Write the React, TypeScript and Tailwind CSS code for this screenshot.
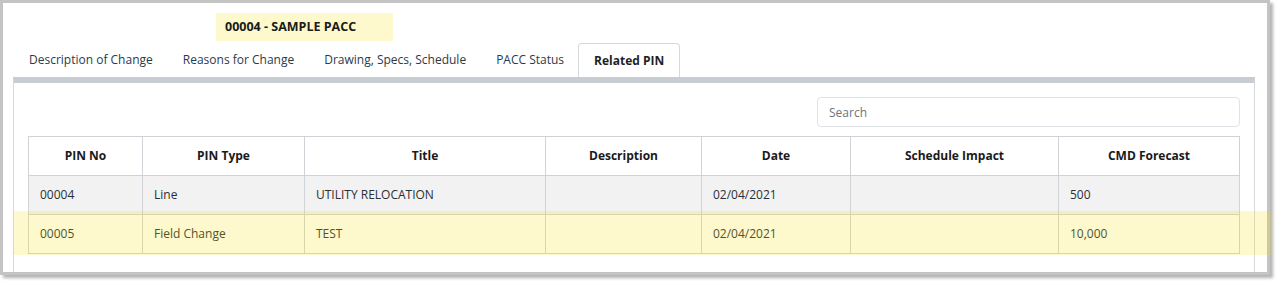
import React from 'react';

interface PinRow {
  pinNo: string;
  pinType: string;
  title: string;
  description: string;
  date: string;
  scheduleImpact: string;
  cmdForecast: string;
}

const tabs = ['Description of Change', 'Reasons for Change', 'Drawing, Specs, Schedule', 'PACC Status', 'Related PIN'];

const columns = [
  { label: 'PIN No', width: 'w-[114px]' },
  { label: 'PIN Type', width: 'w-[162px]' },
  { label: 'Title', width: 'w-[241px]' },
  { label: 'Description', width: 'w-[156px]' },
  { label: 'Date', width: 'w-[149px]' },
  { label: 'Schedule Impact', width: 'w-[208px]' },
  { label: 'CMD Forecast', width: 'w-[181px]' },
];

const rows: PinRow[] = [
  {
    pinNo: '00004',
    pinType: 'Line',
    title: 'UTILITY RELOCATION',
    description: '',
    date: '02/04/2021',
    scheduleImpact: '',
    cmdForecast: '500',
  },
  {
    pinNo: '00005',
    pinType: 'Field Change',
    title: 'TEST',
    description: '',
    date: '02/04/2021',
    scheduleImpact: '',
    cmdForecast: '10,000',
  },
];

const App: React.FC = () => {
  const activeTab = 'Related PIN';

  return (
    <div className="relative w-[1280px] h-[285px] bg-white font-['Open_Sans',sans-serif] text-[#212529]">
      <div className="flex flex-col w-[1270px] h-[275px] border-[3px] border-[#c4c4c4] bg-white shadow-[3px_3px_3px_rgba(0,0,0,0.3)] overflow-hidden">
        <div className="pt-[10px] pl-[213px]">
          <div className="inline-flex items-center h-[28px] w-[177px] px-[9px] bg-[#fdf9cc] text-[12.5px] font-bold text-[#1a1a1a]">
            00004 - SAMPLE PACC
          </div>
        </div>

        <div className="flex flex-col flex-1 mt-[2px] ml-[10px] mr-[12px]">
          {/* tabs */}
          <div className="flex h-[34px]">
            {tabs.map((tab) => (
              <div
                key={tab}
                className={`flex items-center text-[12px] ${
                  tab === activeTab
                    ? 'px-[15px] font-bold border border-b-0 border-[#d5d9de] rounded-t-[4px] bg-white text-[#1f1f1f]'
                    : 'pl-4 pr-[14px] text-[#2b3a4a]'
                }`}>
                {tab}
              </div>
            ))}
          </div>

          {/* panel */}
          <div className="flex-1 border-x border-[#d5d9de] border-t-[6px] border-t-[#c8ccd3] px-[14px] pt-[14px]">
            <div className="flex justify-end">
              <input
                placeholder="Search"
                className="w-[423px] h-[30px] px-[11px] border border-[#dfe2e6] rounded-[4px] text-[12px] placeholder:text-[#6c757d] outline-none"
              />
            </div>

            <table className="mt-[9px] table-fixed border-collapse w-[1211px] text-[12px]">
              <colgroup>
                {columns.map((col) => (
                  <col key={col.label} className={col.width} />
                ))}
              </colgroup>
              <thead>
                <tr className="h-[39px] bg-white">
                  {columns.map((col) => (
                    <th key={col.label} className="border border-[#cfd2d6] font-bold text-center text-[#1a1a1a]">
                      {col.label}
                    </th>
                  ))}
                </tr>
              </thead>
              <tbody>
                {rows.map((row, i) => (
                  <tr key={row.pinNo} className={`h-[39px] ${i === 0 ? 'bg-[#f2f2f2]' : 'bg-white'}`}>
                    {[row.pinNo, row.pinType, row.title, row.description, row.date, row.scheduleImpact, row.cmdForecast].map(
                      (val, j) => (
                        <td key={j} className="border border-[#cfd2d6] px-[11px] text-left text-[#2a2f36]">
                          {val}
                        </td>
                      ),
                    )}
                  </tr>
                ))}
              </tbody>
            </table>
          </div>
        </div>
      </div>

      {/* highlight annotation over the selected row */}
      <div className="absolute left-[14px] top-[211px] w-[1257px] h-[44px] bg-[rgba(245,225,0,0.2)] pointer-events-none" />
    </div>
  );
};

export default App;
